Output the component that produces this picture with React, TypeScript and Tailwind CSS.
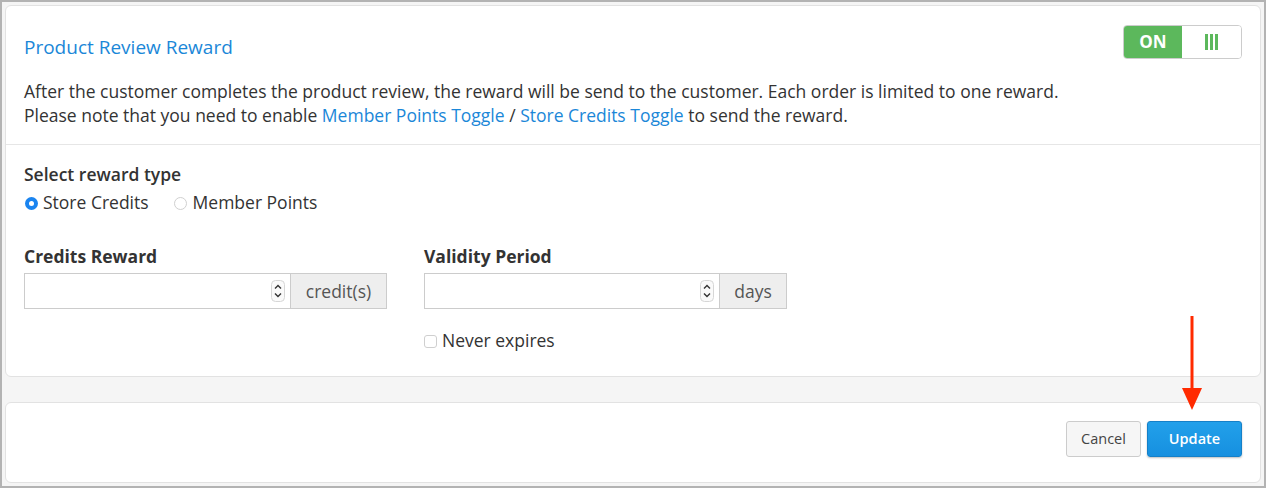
import React from "react";

const font = { fontFamily: '"Open Sans", "Liberation Sans", sans-serif' };

function Spinner() {
  return (
    <svg width="14" height="22" viewBox="0 0 14 22" className="shrink-0">
      <rect x="0.5" y="0.5" width="13" height="21" rx="4" fill="#fafafa" stroke="#d6d6d6" />
      <path d="M4 8.5 L7 5.5 L10 8.5" fill="none" stroke="#333" strokeWidth="1.4" />
      <path d="M4 13.5 L7 16.5 L10 13.5" fill="none" stroke="#333" strokeWidth="1.4" />
    </svg>
  );
}

function NumberField({ addon, addonW }: { addon: string; addonW: string }) {
  return (
    <div className="flex h-[36px] w-[363px]">
      <div className="flex flex-1 items-center justify-end border border-[#cccccc] bg-white pr-[5px]">
        <Spinner />
      </div>
      <div
        className={`flex items-center justify-center border border-l-0 border-[#cccccc] bg-[#eeeeee] text-[17.5px] text-[#555555] ${addonW}`}
      >
        {addon}
      </div>
    </div>
  );
}

export default function App() {
  return (
    <div
      style={font}
      className="flex h-[488px] w-[1266px] flex-col gap-[25px] border-2 border-[#b3b3b3] bg-[#f5f5f5] p-[3px] text-[#333333]"
    >
      <div className="rounded-[6px] border border-[#e2e2e2] bg-white">
        <div className="border-b border-[#e6e6e6] px-[18px] pb-[17px] pt-[19px]">
          <div className="flex items-start justify-between">
            <div className="mt-[10px] text-[19px] leading-[24px] text-[#1b87d8]">Product Review Reward</div>
            <div className="flex h-[34px] w-[119px] overflow-hidden rounded-[4px] border border-[#cccccc]">
              <div className="flex w-[58px] items-center justify-center bg-[#5cb85c] text-[17px] font-bold text-white">
                ON
              </div>
              <div className="flex flex-1 items-center justify-center gap-[2px] bg-white">
                <span className="h-[16px] w-[3px] bg-[#5cb85c]" />
                <span className="h-[16px] w-[3px] bg-[#5cb85c]" />
                <span className="h-[16px] w-[3px] bg-[#5cb85c]" />
              </div>
            </div>
          </div>
          <div className="mt-[20px] text-[17.5px] leading-[24px]">
            <p>
              After the customer completes the product review, the reward will be send to the customer. Each order is
              limited to one reward.
            </p>
            <p>
              Please note that you need to enable <span className="text-[#1b87d8]">Member Points Toggle</span> /{" "}
              <span className="text-[#1b87d8]">Store Credits Toggle</span> to send the reward.
            </p>
          </div>
        </div>
        <div className="px-[18px] pb-[24px] pt-[17px] text-[17.5px] leading-[24px]">
          <div className="font-semibold">Select reward type</div>
          <div className="mt-[4px] flex items-center">
            <span className="ml-[1px] mt-[2px] flex h-[13px] w-[13px] items-center justify-center rounded-full bg-[#1a84f0]">
              <span className="h-[5px] w-[5px] rounded-full bg-white" />
            </span>
            <span className="ml-[5px]">Store Credits</span>
            <span className="ml-[25px] mt-[2px] h-[13px] w-[13px] rounded-full border border-[#d0d0d0] bg-white" />
            <span className="ml-[6px]">Member Points</span>
          </div>
          <div className="mt-[30px] flex gap-[37px]">
            <div>
              <div className="font-bold">Credits Reward</div>
              <div className="mt-[5px]">
                <NumberField addon="credit(s)" addonW="w-[96px]" />
              </div>
            </div>
            <div>
              <div className="font-bold">Validity Period</div>
              <div className="mt-[5px]">
                <NumberField addon="days" addonW="w-[67px]" />
              </div>
              <div className="mt-[19px] flex items-center">
                <span className="mt-[3px] h-[13px] w-[13px] rounded-[3px] border border-[#cfcfcf] bg-white" />
                <span className="ml-[5px]">Never expires</span>
              </div>
            </div>
          </div>
        </div>
      </div>
      <div className="relative flex h-[82px] justify-end gap-[6px] rounded-[6px] border border-[#e2e2e2] bg-white pr-[18px] pt-[18px]">
        <button className="h-[36px] w-[75px] rounded-[3px] border border-[#cccccc] bg-[#f6f6f6] text-[14.5px] text-[#444444]">
          Cancel
        </button>
        <button className="h-[36px] w-[95px] rounded-[3px] border border-[#1580c8] bg-gradient-to-b from-[#22a0ea] to-[#1690e0] text-[14.5px] font-semibold text-white shadow-[0_1px_2px_rgba(0,0,0,0.25)]">
          Update
        </button>
        <svg
          className="absolute right-[56px] top-[-87px]"
          width="24"
          height="96"
          viewBox="0 0 24 96"
        >
          <line x1="12" y1="0" x2="12" y2="76" stroke="#ff2a00" strokeWidth="3" />
          <path d="M2 72 L22 72 L12 94 Z" fill="#ff2a00" />
        </svg>
      </div>
    </div>
  );
}
